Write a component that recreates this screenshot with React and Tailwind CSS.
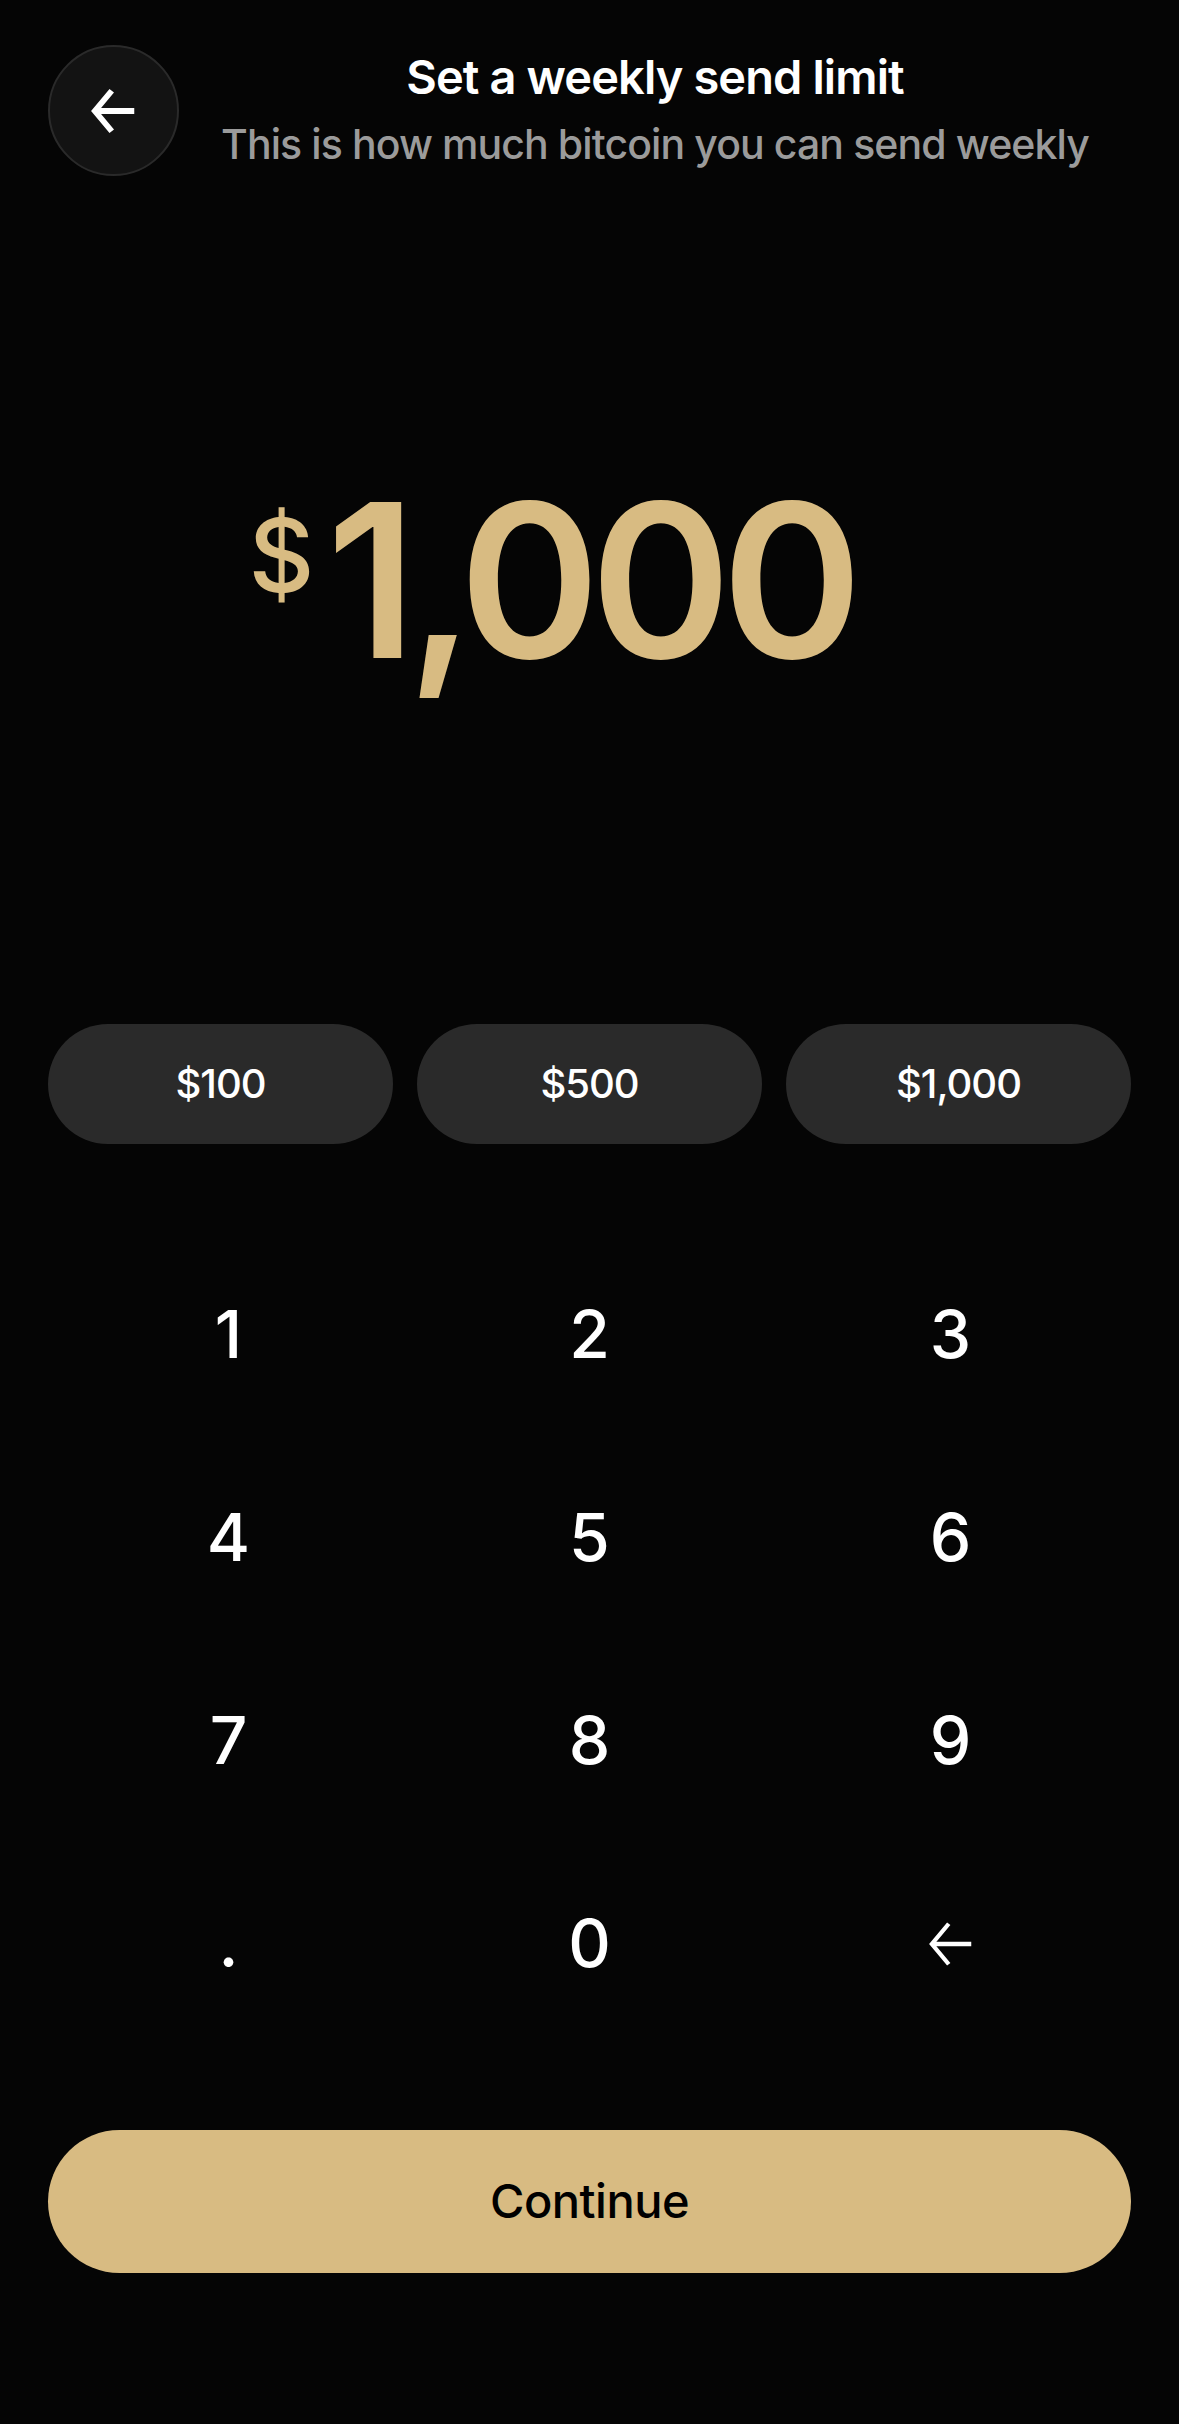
import React, { useState } from 'react';

const presets = ['$100', '$500', '$1,000'];
const keys = ['1', '2', '3', '4', '5', '6', '7', '8', '9', '.', '0', 'back'];

const ArrowLeft = ({ className, strokeWidth = 2 }) => (
  <svg viewBox="0 0 24 24" fill="none" stroke="currentColor" strokeWidth={strokeWidth} strokeLinecap="butt" strokeLinejoin="miter" className={className}>
    <path d="M21 12H3.5" />
    <path d="M11 3L3.5 12L11 21" />
  </svg>
);

const App = () => {
  const [amount] = useState('1,000');

  return (
    <div
      className="h-[2424px] w-full bg-[#050505] text-white flex flex-col"
      style={{ fontFamily: 'Inter, "Noto Sans", sans-serif' }}
    >
      {/* header */}
      <div className="flex items-start px-[48px] pt-[45px]">
        <button className="w-[131px] h-[131px] shrink-0 rounded-full bg-[#131313] border-2 border-[#2a2a2a] flex items-center justify-center text-white">
          <ArrowLeft className="w-[54px] h-[54px]" strokeWidth={2.6} />
        </button>
        <div className="flex-1 flex flex-col items-center pt-[5px]">
          <div className="text-[47px] leading-[54px] font-semibold tracking-[-0.9px]">Set a weekly send limit</div>
          <div className="mt-[16px] text-[41px] leading-[48px] font-medium text-[#9b9b9b] tracking-[-0.9px]">
            This is how much bitcoin you can send weekly
          </div>
        </div>
      </div>

      {/* amount */}
      <div className="h-[848px] flex items-start justify-center pt-[298px] pr-[78px]">
        <div className="flex items-start text-[#d8bb82]">
          <span className="text-[102px] leading-none font-medium mt-[30px] mr-[14px] tracking-[-2px]">$</span>
          <span className="text-[214px] leading-[214px] font-semibold tracking-[-10px]">{amount}</span>
        </div>
      </div>

      {/* presets */}
      <div className="grid grid-cols-3 gap-[24px] px-[48px]">
        {presets.map((p) => (
          <button key={p} className="h-[120px] rounded-full bg-[#2a2a2a] text-white text-[40px] font-medium tracking-[-1px]">
            {p}
          </button>
        ))}
      </div>

      {/* keypad */}
      <div className="grid grid-cols-3 px-[48px] mt-[89px]">
        {keys.map((k) => (
          <div key={k} className="h-[203px] flex items-center justify-center text-[66px] font-medium">
            {k === 'back' ? <ArrowLeft className="w-[54px] h-[54px]" strokeWidth={1.9} /> : k}
          </div>
        ))}
      </div>

      {/* continue */}
      <div className="px-[48px] mt-[85px]">
        <button className="w-full h-[143px] rounded-full bg-[#d8bb82] text-black text-[47px] font-medium tracking-[-0.5px]">
          Continue
        </button>
      </div>
    </div>
  );
};

export default App;
